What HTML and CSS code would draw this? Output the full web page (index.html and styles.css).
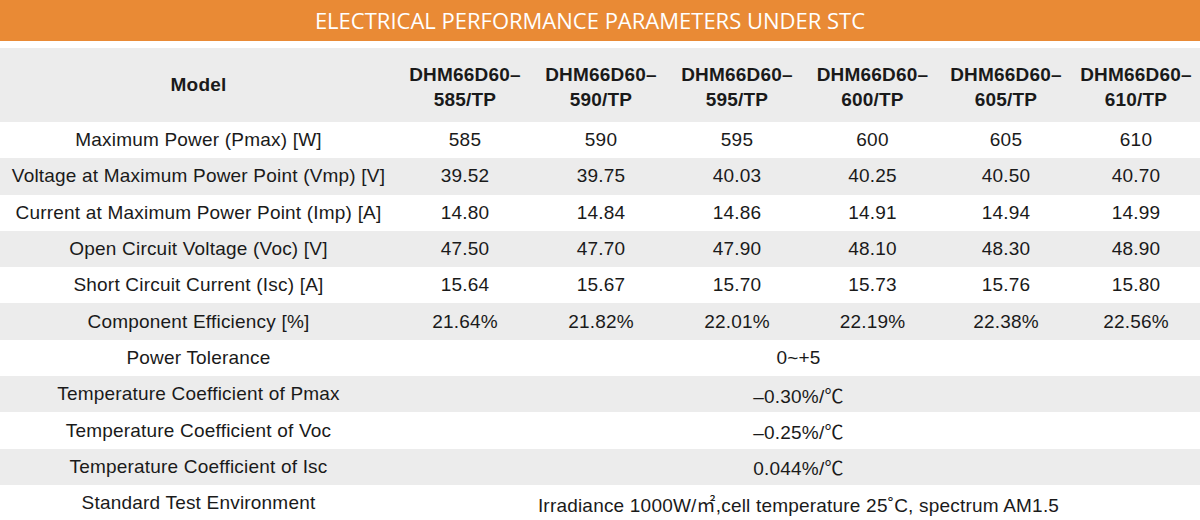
FILE: index.html
```html
<!DOCTYPE html>
<html lang="en">
<head>
<meta charset="utf-8">
<title>Electrical Performance Parameters under STC</title>
<link rel="stylesheet" href="styles.css">
</head>
<body>
<div class="sheet">
  <div class="title">ELECTRICAL PERFORMANCE PARAMETERS UNDER STC</div>
  <table class="spec">
    <colgroup>
      <col class="c-label">
      <col class="c-1">
      <col class="c-2">
      <col class="c-3">
      <col class="c-4">
      <col class="c-5">
      <col class="c-6">
    </colgroup>
    <thead>
      <tr>
        <th class="model">Model</th>
        <th>DHM66D60–<br>585/TP</th>
        <th>DHM66D60–<br>590/TP</th>
        <th>DHM66D60–<br>595/TP</th>
        <th>DHM66D60–<br>600/TP</th>
        <th>DHM66D60–<br>605/TP</th>
        <th>DHM66D60–<br>610/TP</th>
      </tr>
    </thead>
    <tbody>
      <tr><td>Maximum Power (Pmax) [W]</td><td>585</td><td>590</td><td>595</td><td>600</td><td>605</td><td>610</td></tr>
      <tr><td>Voltage at Maximum Power Point (Vmp) [V]</td><td>39.52</td><td>39.75</td><td>40.03</td><td>40.25</td><td>40.50</td><td>40.70</td></tr>
      <tr><td>Current at Maximum Power Point (Imp) [A]</td><td>14.80</td><td>14.84</td><td>14.86</td><td>14.91</td><td>14.94</td><td>14.99</td></tr>
      <tr><td>Open Circuit Voltage (Voc) [V]</td><td>47.50</td><td>47.70</td><td>47.90</td><td>48.10</td><td>48.30</td><td>48.90</td></tr>
      <tr><td>Short Circuit Current (Isc) [A]</td><td>15.64</td><td>15.67</td><td>15.70</td><td>15.73</td><td>15.76</td><td>15.80</td></tr>
      <tr><td>Component Efficiency [%]</td><td>21.64%</td><td>21.82%</td><td>22.01%</td><td>22.19%</td><td>22.38%</td><td>22.56%</td></tr>
      <tr><td>Power Tolerance</td><td colspan="6">0~+5</td></tr>
      <tr><td>Temperature Coefficient of Pmax</td><td colspan="6">–0.30%/℃</td></tr>
      <tr><td>Temperature Coefficient of Voc</td><td colspan="6">–0.25%/℃</td></tr>
      <tr><td>Temperature Coefficient of Isc</td><td colspan="6">0.044%/℃</td></tr>
      <tr><td>Standard Test Environment</td><td colspan="6">Irradiance 1000W/㎡,cell temperature 25˚C, spectrum AM1.5</td></tr>
    </tbody>
  </table>
</div>
</body>
</html>
```

FILE: styles.css
```css
html, body {
  margin: 0;
  padding: 0;
  background: #ffffff;
}

.sheet {
  width: 1200px;
  height: 520px;
  overflow: hidden;
  font-family: "Liberation Sans", Arial, "Noto Sans CJK SC", sans-serif;
  color: #1a1a1a;
}

.title {
  height: 41px;
  background: #e98a35;
  color: #ffffff;
  font-family: "Open Sans", "Liberation Sans", sans-serif;
  font-size: 22px;
  line-height: 41px;
  text-align: center;
  padding-right: 20px;
  margin-bottom: 7px;
}

.spec {
  width: 1200px;
  border-collapse: collapse;
  table-layout: fixed;
  font-size: 19px;
  letter-spacing: 0.2px;
}

.c-label { width: 397px; }
.c-1 { width: 136px; }
.c-2 { width: 136px; }
.c-3 { width: 136px; }
.c-4 { width: 135px; }
.c-5 { width: 132px; }
.c-6 { width: 128px; }

.spec th,
.spec td {
  padding: 0;
  text-align: center;
  vertical-align: middle;
  white-space: nowrap;
}

.spec thead tr {
  background: #ececec;
}

.spec th {
  height: 74px;
  padding-top: 4px;
  box-sizing: border-box;
  font-weight: bold;
  line-height: 25px;
}

.spec th.model {
  padding-top: 0;
  padding-bottom: 2px;
}

.spec td {
  height: 36.3px;
  font-weight: normal;
}

.spec tbody tr:nth-child(even) {
  background: #ececec;
}
```
